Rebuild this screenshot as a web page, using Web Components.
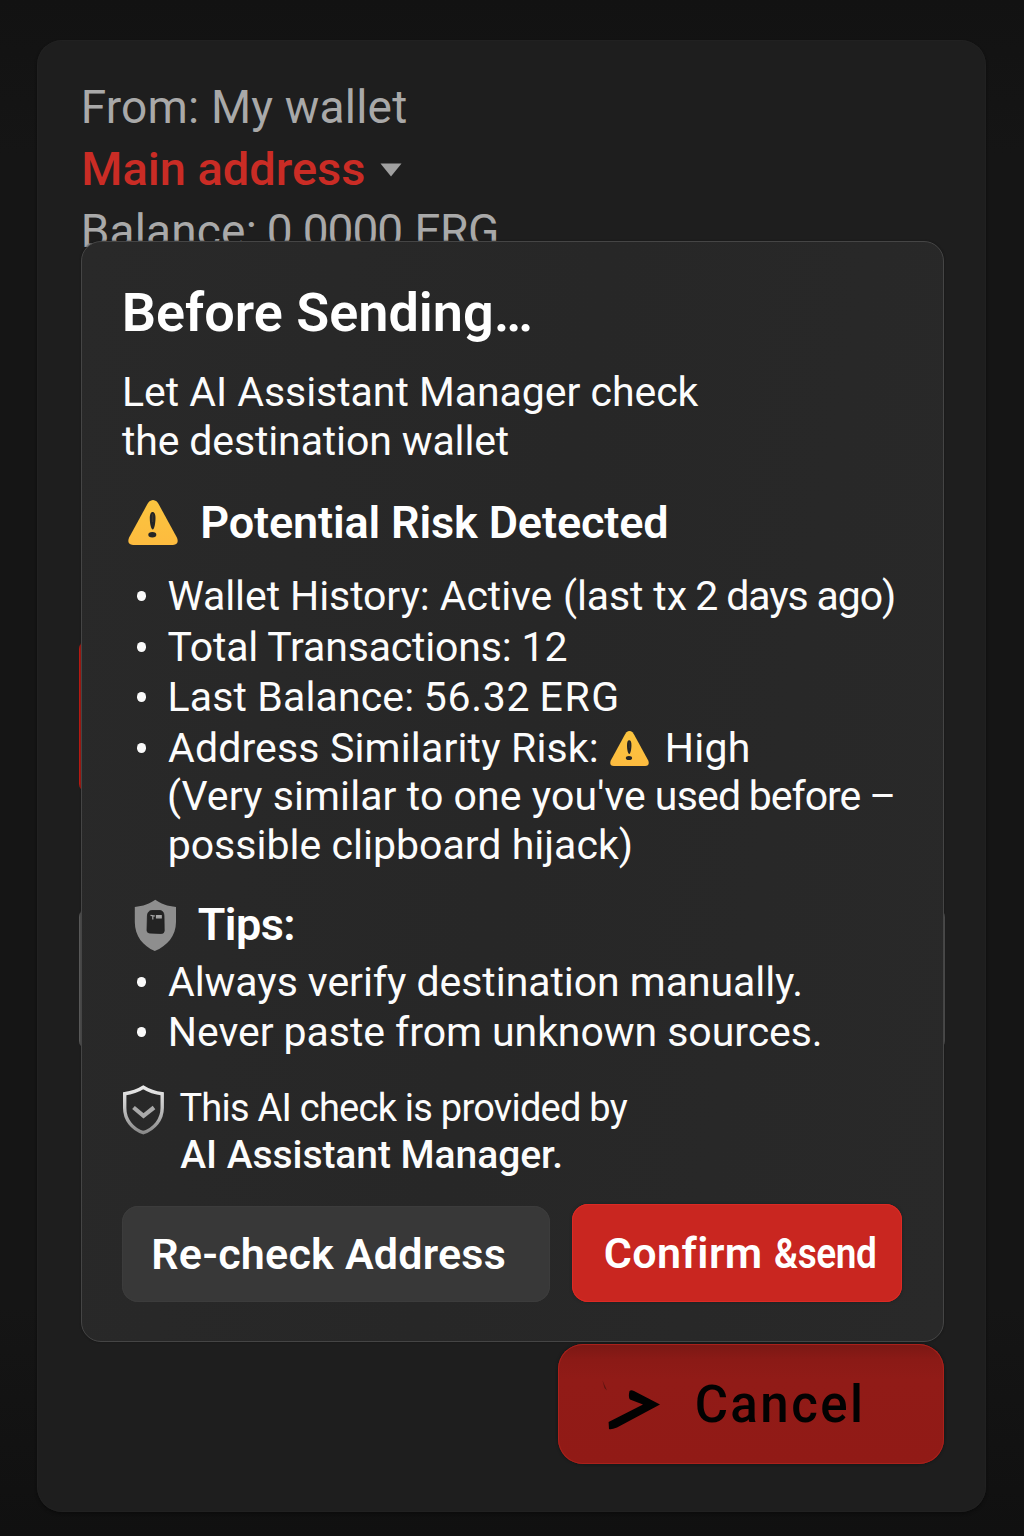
<!DOCTYPE html>
<html lang="en">
<head>
<meta charset="utf-8">
<title>Before Sending</title>
<style>
html,body{margin:0;height:100%}
body{background:#141414;font-family:Roboto,"Liberation Sans",sans-serif;overflow:hidden}
</style>
</head>
<body>
<send-screen></send-screen>
<script>
const define=(name,html,extra)=>{
  const t=document.createElement('template');t.innerHTML=html;
  customElements.define(name,class extends HTMLElement{
    constructor(){super();this.attachShadow({mode:'open'}).append(t.content.cloneNode(true));}
    connectedCallback(){if(extra)extra.call(this);}
  });
};

/* A run of text whose glyphs are tracked to fill a given width, edge to edge.
   Side bearings are measured at ten times the size, for sub-pixel precision. */
const ctx=document.createElement('canvas').getContext('2d');
define('fit-text',`<style>
:host{display:block;flex:none;white-space:pre}
span{display:inline-block;transform-origin:0 50%}
</style><span><slot></slot></span>`,function(){
  const s=this.shadowRoot.querySelector('span'),txt=this.textContent,g=a=>+this.getAttribute(a);
  const size=g('size'),weight=g('weight')||400,ink=g('ink'),sx=g('squeeze')||1;
  this.style.fontSize=size+'px';this.style.fontWeight=weight;this.style.width=ink+'px';
  if(g('indent'))this.style.marginLeft=g('indent')+'px';
  ctx.font=`${weight} ${size*10}px Roboto, "Liberation Sans", sans-serif`;
  const m=ctx.measureText(txt),w=(m.actualBoundingBoxRight+m.actualBoundingBoxLeft)/10;
  s.style.letterSpacing=((ink/sx-w)/(txt.length-1)).toFixed(3)+'px';
  s.style.marginLeft=(m.actualBoundingBoxLeft/10*sx).toFixed(2)+'px';
  if(sx!==1)s.style.transform=`scaleX(${sx})`;
});

/* One line of text: a row of runs with a fixed height. */
define('text-line',`<style>
:host{display:flex;height:var(--h,50px);line-height:var(--h,50px);align-items:center}
</style><slot></slot>`);

define('bullet-item',`<style>
:host{display:grid;grid-template-columns:30px 1fr;}
i{width:9.600px;height:10px;border-radius:50%;background:#fafafa;margin:20px 0 0 -1.300px}
</style><i></i><div><slot></slot></div>`);

define('warning-icon',`<style>:host{display:block;flex:none}svg{display:block;width:100%;height:100%}</style>
<svg viewBox="0 0 50 45" preserveAspectRatio="none"><defs><linearGradient id="g" x1="0" y1="0" x2="0" y2="1"><stop offset="0" stop-color="#fbc53f"/><stop offset="1" stop-color="#fdbb3f"/></linearGradient></defs>
<path d="M21.2 1.600Q25-1.600 28.800 1.600Q30 3 31 4.800L49 37.800Q51.500 44.500 45 45H5Q-1.500 44.500 1 37.800L19 4.800Q20 3 21.200 1.600Z" fill="url(#g)"/>
<path d="M24.600 12C26.500 12 27.700 14.500 27.500 18.500C27.400 23.500 26.300 29.500 24.800 29.500C23.200 29.500 21.800 24 21.800 18.500C21.800 14.500 22.700 12 24.600 12Z" fill="#252525"/>
<path d="M24.700 14V22" stroke="#6b5a35" stroke-width=".7" opacity=".6"/>
<ellipse cx="24.300" cy="34.700" rx="4" ry="2.700" fill="#252525"/></svg>`);

define('tips-shield',`<style>:host{display:block;flex:none;width:43px;height:53px}svg{display:block}</style>
<svg width="43" height="53" viewBox="0 0 43 53">
<path d="M21.300.8C26 4.500 34 7.400 42 8V23C42 37 33 47 20.800 52C9 47 .8 37 .8 23V8C8.500 7.400 16.500 4.500 21.300.8Z" fill="#8e8e8e"/>
<path d="M17.500 11.500H26Q29.800 11.800 30 17L30.200 32Q30 34.500 27.500 34.500L15.500 34Q13 33.800 13 31.500L13.400 17Q13.600 12 17.500 11.500Z" fill="#232323" stroke="#1c1c1c" stroke-width=".8"/>
<path d="M16.500 16.300L21 17M18.800 17V20.500M22.500 16.500H27.200V18.800H22.500Z" stroke="#a5a5a5" stroke-width="1.200" fill="#a5a5a5"/></svg>`);

define('check-shield',`<style>:host{display:block;flex:none;width:42px;height:50px}svg{display:block}</style>
<svg width="42" height="50" viewBox="0 0 42 50"><defs><linearGradient id="s" gradientUnits="userSpaceOnUse" x1="0" y1="0" x2="0" y2="50"><stop offset="0" stop-color="#ededed"/><stop offset=".45" stop-color="#c4c4c4"/><stop offset="1" stop-color="#858585"/></linearGradient></defs>
<path d="M21.300 2.300C26.300 5.500 33.300 8 40.200 8.800V23C40.200 34.500 32.500 43.800 21.300 47.700C10 43.800 2.700 34.500 2.700 23V8.800C9 8 16.300 5.500 21.300 2.300Z" fill="none" stroke="url(#s)" stroke-width="3.400"/>
<path d="M11.500 22.500L21.500 30.800L32 22.500" fill="none" stroke="#a9a9a9" stroke-width="4.200"/></svg>`);

define('action-button',`<style>
:host{display:flex;box-sizing:border-box;height:var(--bh,96px);width:var(--w);padding-left:var(--pl,32px);align-items:center;border-radius:var(--r,16px);background:var(--bg);box-shadow:inset 0 0 0 1px var(--edge),var(--drop,0 0 0 transparent);color:var(--fg,#fff)}
</style><slot></slot>`);

define('wallet-card',`<style>
:host{display:flex;flex-direction:column;box-sizing:border-box;width:949px;height:1472px;margin:40px 0 0 37px;padding:37px 42px 48px;border-radius:25px;background:#1e1e1e;box-shadow:inset 0 0 0 1px #212121,0 2px 3px #0c0c0c;color:#a9a9a9}
text-line{margin-left:5.300px;--h:61px}
.main{color:#ca2c25}
.balance{margin-top:2px}
svg{margin:2px 0 0 16px}
.amount{margin-top:379px;width:300px;height:151px;border-radius:8px;background:#c01a12}
.field{margin-top:117px;width:866px;height:140px;border-radius:8px;background:#5c5c5c;box-sizing:border-box}
action-button{margin:auto 0 0 auto;--w:386.500px;--bh:120px;--r:25px;--pl:47.500px;--fg:#020202;--bg:linear-gradient(#7b1814,#8b1a16 13%,#911b17 30%,#911a16);--edge:#aa211b;--drop:0 0 3px #0d1415}
action-button svg{margin:6px 37px 0 0}
</style>
<text-line><fit-text size="46" ink="321.500">From: My wallet</fit-text></text-line>
<text-line class="main"><fit-text size="47" weight="500" ink="279.700">Main address</fit-text><svg width="22" height="14" viewBox="0 0 22 14"><path d="M.5.500H21.500L11 13.500Z" fill="#a0a0a0"/></svg></text-line>
<text-line class="balance"><fit-text size="46" ink="170">Balance:</fit-text><fit-text size="46" indent="14.700" ink="132">0.0000</fit-text><fit-text size="46" indent="17" ink="78">ERG</fit-text></text-line>
<div class="amount"></div>
<div class="field"></div>
<action-button><svg width="55" height="52" viewBox="0 0 55 52" overflow="visible"><path d="M24.500 10Q26 8.500 29 10L55 23.500L12 46.500Q6 49 4 48L3.600 41L38 23.500L25 18.500Q23 16.500 24.500 10Z" fill="#020202"/><path d="M-2.500-.5L2 9.500L-.5 7Z" fill="#591411"/></svg><fit-text size="51" weight="500" ink="162.500">Cancel</fit-text></action-button>`);

define('risk-dialog',`<style>
:host{display:flex;flex-direction:column;box-sizing:border-box;width:863px;height:1101px;padding:39px 40px 0;border:1px solid #454545;border-radius:20px;background:linear-gradient(100deg,#292929,#272727 50%,#292929);box-shadow:0 0 2px #141414;color:#fcfcfc}
.title{--h:64px;color:#fff}
.intro{margin-top:23px}
.intro text-line{--h:49px}
.head{display:flex;align-items:center;color:#fff}
.risk{margin:26px 0 0 6px;height:60px}
.risk warning-icon{width:50px;height:45px;margin-right:25px}
.facts{margin:19px 0 0 16px}
.facts .cont{--h:48.500px}
.facts .first{margin-top:-1px}
.facts bullet-item{--h:50.600px}
.sim warning-icon{width:39px;height:35px;margin:0 19px 0 13.500px}
.tips{margin:25px 0 0 11px;height:60px}
.tips tips-shield{margin:2px 22px 0 .5px}
.advice{margin:3px 0 0 16px}
.note{display:flex;margin-top:28px;gap:16px}
.note check-shield{margin-top:0}
.note text-line{--h:47px}
.actions{display:flex;align-items:flex-end;gap:22px;margin-top:25px}
.re{--w:428px;--bh:96px;--bg:#383838;--edge:#3c3c3c}
.ok{--w:330px;--bh:98px;--pl:33px;--bg:#c92620;--edge:#dc2a24;--drop:0 0 3px #172022}
</style>
<text-line class="title"><fit-text size="54" weight="600" indent="3" ink="405">Before Sending…</fit-text></text-line>
<div class="intro">
<text-line><fit-text size="41" indent="3.200" ink="573.500">Let AI Assistant Manager check</fit-text></text-line>
<text-line><fit-text size="41" ink="386">the destination wallet</fit-text></text-line>
</div>
<div class="head risk"><warning-icon></warning-icon><fit-text size="45" weight="600" ink="463.500">Potential Risk Detected</fit-text></div>
<div class="facts">
<bullet-item><text-line><fit-text size="41" ink="383">Wallet History: Active</fit-text><fit-text size="41" ink="121" indent="14.500">(last tx</fit-text><fit-text size="41" ink="197" indent="10">2 days ago)</fit-text></text-line></bullet-item>
<bullet-item><text-line><fit-text size="41" ink="399">Total Transactions: 12</fit-text></text-line></bullet-item>
<bullet-item><text-line><fit-text size="41" indent="2.800" ink="241">Last Balance:</fit-text><fit-text size="41" indent="14.500" ink="102">56.32</fit-text><fit-text size="41" indent="14.500" ink="73.500">ERG</fit-text></text-line></bullet-item>
<bullet-item><text-line class="sim"><fit-text size="41" ink="428.500">Address Similarity Risk:</fit-text><warning-icon></warning-icon><fit-text size="41" ink="79.500">High</fit-text></text-line>
<text-line class="cont first"><fit-text size="41" indent="1.600" ink="475">(Very similar to one you've</fit-text><fit-text size="41" ink="81" indent="12.800">used</fit-text><fit-text size="41" ink="141.500" indent="13">before –</fit-text></text-line>
<text-line class="cont"><fit-text size="41" indent="2.200" ink="460">possible clipboard hijack)</fit-text></text-line></bullet-item>
</div>
<div class="head tips"><tips-shield></tips-shield><fit-text size="45" weight="600" ink="94.500">Tips:</fit-text></div>
<div class="advice">
<bullet-item><text-line><fit-text size="41" ink="632">Always verify destination manually.</fit-text></text-line></bullet-item>
<bullet-item><text-line><fit-text size="41" indent="3" ink="648.500">Never paste from unknown sources.</fit-text></text-line></bullet-item>
</div>
<div class="note"><check-shield></check-shield><div>
<text-line><fit-text size="38" ink="447.500">This AI check is provided by</fit-text></text-line>
<text-line><fit-text size="39" weight="500" indent=".2" ink="380.500">AI Assistant Manager.</fit-text></text-line>
</div></div>
<div class="actions">
<action-button class="re"><fit-text size="43" weight="600" ink="350.500">Re-check Address</fit-text></action-button>
<action-button class="ok"><fit-text size="43" weight="600" ink="154">Confirm</fit-text><fit-text size="43" weight="600" ink="100" squeeze="0.86" indent="16">&amp;send</fit-text></action-button>
</div>`);

define('send-screen',`<style>
:host{display:block;position:relative;width:1024px;height:1536px;overflow:hidden;background:linear-gradient(#121212,#151515 10%,#151515 85%,#101010)}
:host::before{content:"";display:table}
risk-dialog{position:absolute;left:81px;top:241px}
</style><wallet-card></wallet-card><risk-dialog></risk-dialog>`);
</script>
</body>
</html>
